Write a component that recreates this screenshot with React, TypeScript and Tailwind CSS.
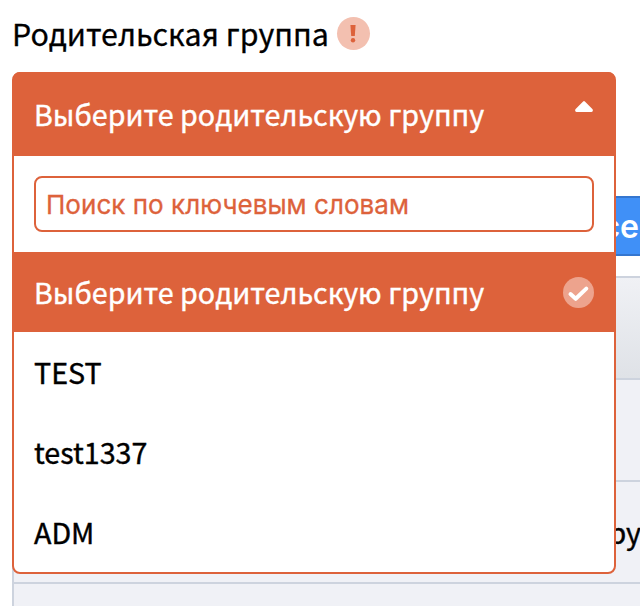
import React from "react";

const items = ["TEST", "test1337", "ADM"];
const label =
  "whitespace-nowrap font-['Noto_Sans_CJK_SC',sans-serif] text-[28.65px] font-normal [-webkit-text-stroke:0.4px_currentColor]";

function Background() {
  return (
    <div className="flex h-[606px] flex-col pl-3 pt-[196px]">
      <div className="flex h-[60px] shrink-0 items-center justify-end border-y-2 border-[#3576cf] bg-[#4090f7] pr-[1px] font-['Inter',sans-serif] text-[32px] font-semibold text-white">
        <span className="mt-[2px]">Все</span>
      </div>
      <div className="mt-5 flex grow flex-col border-l-2 border-t-2 border-[#cdd3de] bg-[#f0f1f6]">
        <div className="h-[102px] shrink-0 border-b-2 border-[#cdd3de] bg-linear-to-b from-[#f0f1f5] to-[#dfe2e7]" />
        <div className="h-[102px] shrink-0 border-b-2 border-[#cdd3de]" />
        <div className="flex h-[102px] shrink-0 items-center justify-end border-b-2 border-[#cdd3de] text-black">
          <span className={`${label} -mr-[1px]`}>Гру</span>
        </div>
      </div>
    </div>
  );
}

export default function App() {
  return (
    <div className="relative h-[606px] w-[640px] overflow-hidden bg-white">
      <Background />
      <div className="absolute left-3 top-[14px] flex h-10 items-center">
        <span className="-mt-[2px] whitespace-nowrap font-['Noto_Sans_CJK_SC',sans-serif] text-[30.35px] leading-10 text-black [-webkit-text-stroke:0.3px_currentColor]">
          Родительская группа
        </span>
        <span className="ml-2 -mt-[1px] flex h-[33px] w-[33px] items-center justify-center rounded-full bg-[#f3c0b0]">
          <svg width="6" height="18" viewBox="0 0 6 18" fill="#dd623b">
            <path d="M.4 0h5.2L4.8 11H1.2z" />
            <circle cx="3" cy="15.2" r="2.2" />
          </svg>
        </span>
      </div>
      <div className="absolute left-3 top-[72px] flex h-[502px] w-[604px] flex-col rounded-lg border-2 border-[#dd623b] bg-white">
        <div className="flex h-[82px] shrink-0 items-center justify-between rounded-t-md bg-[#dd623b] pl-5 pr-[21px] text-white shadow-[0_-1px_0_1px_#dd623b]">
          <span className={`${label} -mt-[2px]`}>Выберите родительскую группу</span>
          <svg width="18" height="11" viewBox="0 0 18 11" fill="white" className="-mt-[17px]">
            <path d="M8.1.5Q9-.4 9.900.5l7.700 7.700Q18.500 10.700 16.500 11h-15Q-.5 10.700.4 8.200z" />
          </svg>
        </div>
        <div className="flex h-24 shrink-0 items-center px-5">
          <div className="flex h-14 w-full items-center rounded-lg border-2 border-[#dd623b] pl-[10px] font-['Inter',sans-serif] text-[26px] text-[#dd623b] [-webkit-text-stroke:0.3px_currentColor]">
            <span className="whitespace-nowrap tracking-[0.04px]">Поиск по ключевым словам</span>
          </div>
        </div>
        <div className="flex h-20 shrink-0 items-center justify-between bg-[#dd623b] px-5 text-white">
          <span className={label}>Выберите родительскую группу</span>
          <svg width="31" height="31" viewBox="0 0 31 31">
            <circle cx="15.5" cy="15.5" r="15.5" fill="#eda38d" />
            <path d="m7.500 17 5.200 4.800L23.300 11.600" fill="none" stroke="white" strokeWidth="4" strokeLinejoin="round" strokeLinecap="round" />
          </svg>
        </div>
        {items.map((t) => (
          <div key={t} className="flex h-20 shrink-0 items-center px-5 text-black">
            <span className={label}>{t}</span>
          </div>
        ))}
      </div>
    </div>
  );
}
